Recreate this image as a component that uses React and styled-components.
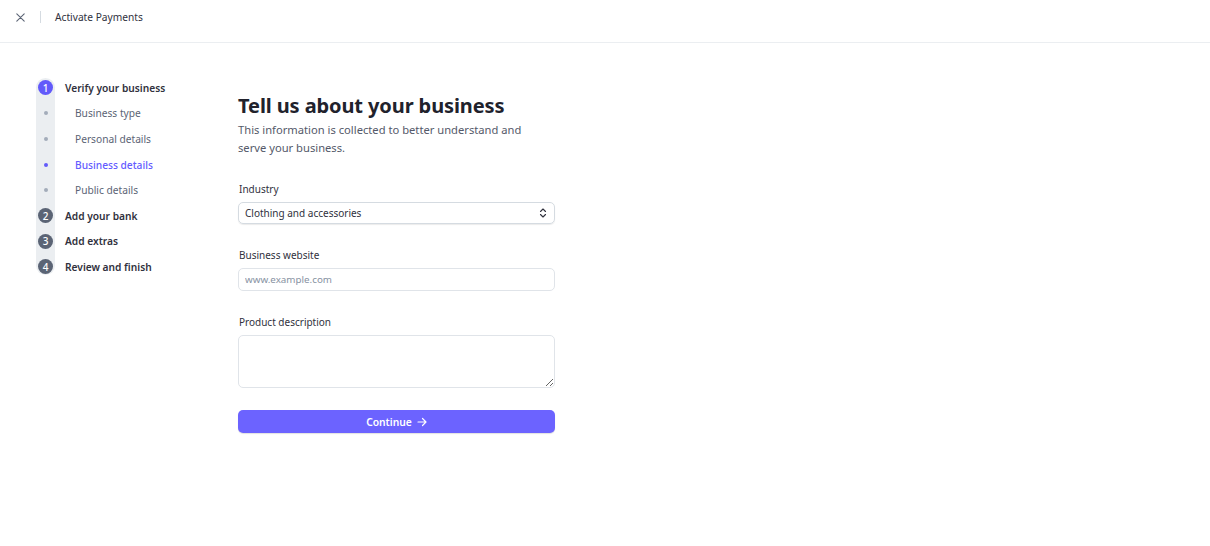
import React from "react";
import styled, { createGlobalStyle } from "styled-components";

const Global = createGlobalStyle`
  html, body { margin: 0; padding: 0; background: #fff; }
  body { font-family: "Noto Sans", "Open Sans", sans-serif; color: #30313d; }
  * { box-sizing: border-box; }
`;

const Page = styled.div`
  width: 1210px;
  min-height: 546px;
  background: #fff;
`;

const Header = styled.header`
  height: 43px;
  border-bottom: 1px solid #ebeef1;
  display: flex;
  align-items: flex-start;
  padding: 10px 0 0 14px;
`;

const CloseButton = styled.button`
  border: 0;
  background: none;
  padding: 0;
  width: 12px;
  height: 14px;
  display: flex;
  align-items: center;
  justify-content: center;
  cursor: pointer;
`;

const Divider = styled.span`
  width: 1px;
  height: 12px;
  background: #d5dbe1;
  margin: 1px 14px 0 14px;
`;

const HeaderTitle = styled.span`
  font-size: 10.2px;
  line-height: 14px;
  color: #30313d;
`;

const Body = styled.div`
  display: flex;
  padding: 36px 0 0 36px;
`;

const Sidebar = styled.nav`
  position: relative;
  width: 202px;
  flex: none;
  margin-top: -4px;
`;

const Track = styled.div`
  position: absolute;
  left: 0;
  top: 3px;
  width: 19px;
  height: 197px;
  background: #ebeef1;
  border-radius: 10px;
`;

const StepList = styled.ul`
  position: relative;
  list-style: none;
  margin: 0;
  padding: 0;
`;

const Step = styled.li`
  display: flex;
  align-items: center;
  height: 25.6px;
  font-size: 10.2px;
  font-weight: ${(p) => (p.$active ? 500 : p.$sub ? 400 : 600)};
  color: ${(p) => (p.$active ? "#635bff" : p.$sub ? "#5b6475" : "#30313d")};
`;

const Marker = styled.span`
  width: 19px;
  flex: none;
  display: flex;
  justify-content: center;
  margin-right: ${(p) => (p.$sub ? "20px" : "10px")};
`;

const Circle = styled.span`
  width: 15px;
  height: 15px;
  border-radius: 50%;
  background: ${(p) => (p.$current ? "#625afa" : "#5b6475")};
  color: #fff;
  font-size: 10px;
  font-weight: 500;
  display: flex;
  align-items: center;
  justify-content: center;
  line-height: 1;
`;

const Dot = styled.span`
  width: 4px;
  height: 4px;
  border-radius: 50%;
  background: ${(p) => (p.$active ? "#625afa" : "#a3acba")};
`;

const Main = styled.main`
  width: 317px;
  padding-top: 14px;
`;

const Title = styled.h1`
  margin: 0;
  font-size: 20px;
  font-weight: 700;
  color: #21222c;
  line-height: 26px;
  letter-spacing: -0.1px;
`;

const Subtitle = styled.p`
  margin: 2px 0 0;
  font-size: 11.2px;
  line-height: 18px;
  color: #545969;
  width: 300px;
`;

const Field = styled.div`
  display: flex;
  flex-direction: column;
  margin-top: ${(p) => p.$mt || "23px"};
`;

const Label = styled.label`
  font-size: 10px;
  color: #30313d;
  line-height: 16px;
  margin-bottom: 5px;
  padding-left: 1px;
`;

const SelectBox = styled.div`
  height: 22px;
  border: 1px solid #d5dbe1;
  border-radius: 5px;
  box-shadow: 0 1px 1px rgba(0, 0, 0, 0.08);
  display: flex;
  align-items: center;
  justify-content: space-between;
  padding: 0 7px 0 6px;
  font-size: 10px;
  color: #30313d;
`;

const Input = styled.input`
  height: 23px;
  border: 1px solid #e0e4e9;
  border-radius: 5px;
  padding: 0 6px;
  font-family: inherit;
  font-size: 9.8px;
  color: #30313d;
  outline: none;
  &::placeholder { color: #8792a2; }
`;

const TextArea = styled.textarea`
  height: 53px;
  border: 1px solid #e0e4e9;
  border-radius: 5px;
  padding: 4px 6px;
  font-family: inherit;
  font-size: 10px;
  outline: none;
  resize: vertical;
  display: block;
`;

const Button = styled.button`
  margin-top: 22px;
  width: 100%;
  height: 23px;
  border: 0;
  border-radius: 5px;
  background: #6c63ff;
  color: #fff;
  font-family: inherit;
  font-size: 10.3px;
  font-weight: 600;
  display: flex;
  align-items: center;
  justify-content: center;
  gap: 5px;
  box-shadow: 0 1px 1px rgba(0, 0, 0, 0.12);
`;

const steps = [
  { label: "Verify your business", n: 1, current: true },
  { label: "Business type", sub: true },
  { label: "Personal details", sub: true },
  { label: "Business details", sub: true, active: true },
  { label: "Public details", sub: true },
  { label: "Add your bank", n: 2 },
  { label: "Add extras", n: 3 },
  { label: "Review and finish", n: 4 },
];

export default function App() {
  return (
    <Page>
      <Global />
      <Header>
        <CloseButton aria-label="Close">
          <svg width="9" height="9" viewBox="0 0 9 9" fill="none">
            <path d="M0.8 0.8L8.2 8.2M8.2 0.8L0.8 8.2" stroke="#5b6475" strokeWidth="1.1" strokeLinecap="round" />
          </svg>
        </CloseButton>
        <Divider />
        <HeaderTitle>Activate Payments</HeaderTitle>
      </Header>
      <Body>
        <Sidebar>
          <Track />
          <StepList>
            {steps.map((s) => (
              <Step key={s.label} $sub={s.sub} $active={s.active}>
                <Marker $sub={s.sub}>
                  {s.sub ? <Dot $active={s.active} /> : <Circle $current={s.current}>{s.n}</Circle>}
                </Marker>
                {s.label}
              </Step>
            ))}
          </StepList>
        </Sidebar>
        <Main>
          <Title>Tell us about your business</Title>
          <Subtitle>This information is collected to better understand and serve your business.</Subtitle>
          <Field $mt="24px">
            <Label>Industry</Label>
            <SelectBox>
              <span>Clothing and accessories</span>
              <svg width="8" height="10" viewBox="0 0 8 10" fill="none">
                <path d="M1.5 3.5L4 1L6.5 3.5M1.5 6.5L4 9L6.5 6.5" stroke="#30313d" strokeWidth="1.1" strokeLinecap="round" strokeLinejoin="round" />
              </svg>
            </SelectBox>
          </Field>
          <Field>
            <Label>Business website</Label>
            <Input placeholder="www.example.com" />
          </Field>
          <Field>
            <Label>Product description</Label>
            <TextArea />
          </Field>
          <Button>
            Continue
            <svg width="10" height="10" viewBox="0 0 10 10" fill="none">
              <path d="M1 5H9M5.5 1.5L9 5L5.5 8.5" stroke="#fff" strokeWidth="1.2" strokeLinecap="round" strokeLinejoin="round" />
            </svg>
          </Button>
        </Main>
      </Body>
    </Page>
  );
}
